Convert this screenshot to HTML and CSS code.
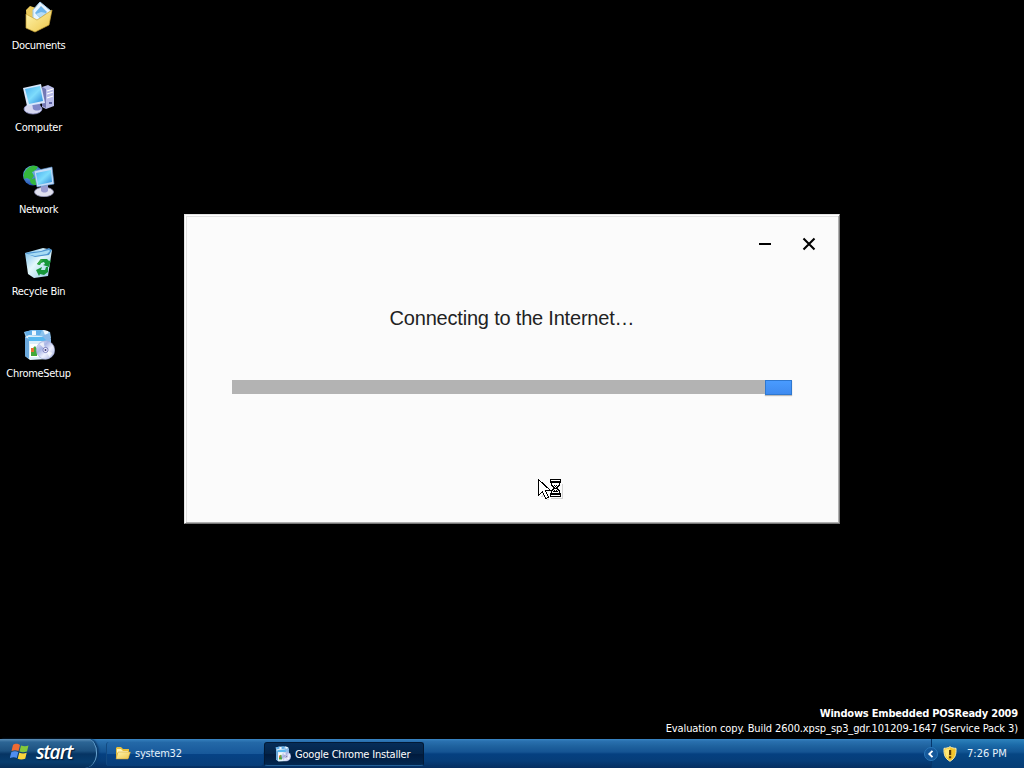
FILE: index.html
```html
<!DOCTYPE html>
<html lang="en">
<head>
<meta charset="utf-8">
<title>Desktop</title>
<link rel="stylesheet" href="styles.css">
</head>
<body>
<svg class="defs" width="0" height="0" aria-hidden="true">
  <defs>
    <linearGradient id="screen" x1="0" y1="0" x2="1" y2="1"><stop offset="0" stop-color="#4ab0f0"/><stop offset=".5" stop-color="#7edcfc"/><stop offset="1" stop-color="#2a86d8"/></linearGradient>
    <linearGradient id="folder" x1="0" y1="0" x2="1" y2="1"><stop offset="0" stop-color="#fff6b0"/><stop offset="1" stop-color="#edc548"/></linearGradient>
    <linearGradient id="bin" x1="0" y1="0" x2="1" y2="1"><stop offset="0" stop-color="#6fb8e8"/><stop offset=".45" stop-color="#e4f8fc"/><stop offset="1" stop-color="#90c8e4"/></linearGradient>
    <linearGradient id="disc" x1="0" y1="0" x2="1" y2="1"><stop offset="0" stop-color="#f4f4ff"/><stop offset=".35" stop-color="#a8b4e4"/><stop offset=".6" stop-color="#eef0ff"/><stop offset="1" stop-color="#9aa8d8"/></linearGradient>
    <radialGradient id="globe" cx=".35" cy=".3" r=".8"><stop offset="0" stop-color="#7cc4f8"/><stop offset="1" stop-color="#1440a8"/></radialGradient>
    <symbol id="setup" viewBox="0 0 32 32">
      <path d="M1 3l8-2 12 0 6 2 1 6H3z" fill="#8cc4ee"/><path d="M2 3l7-2v5l-5 1zM13 1h6l-2 5h-4z" fill="#62aee8"/><path d="M9 2h4v4H9zM20 1l5 1 2 6-5-2z" fill="#f0f8fe"/>
      <path d="M2 8l4-2 19 2v22l-18 1-5-4z" fill="#dceffa"/><path d="M2 8l4 2v20l-4-3z" fill="#6aa8dc"/>
      <path d="M5 8h18v4H6z" fill="#58b8f0"/><path d="M19 7l7-3 2 6v14l-5 6V11z" fill="#88b8e8"/>
      <path d="M7 15h9v13H7z" fill="#fff"/><path d="M8 21l4-4 2 3v7H8z" fill="#42a839"/><path d="M8 19h3v4H8z" fill="#e87030"/>
      <circle cx="22.500" cy="21" r="9.200" fill="url(#disc)" stroke="#a4acd8" stroke-width=".6"/>
      <path d="M22.500 21l-6-6 4-2zM22.500 21l7 3-3 4z" fill="#fff" opacity=".7"/>
      <circle cx="22.500" cy="21" r="2.600" fill="#f0f0ff" stroke="#6668b0" stroke-width=".8"/><circle cx="22.500" cy="21" r="1" fill="#383878"/>
    </symbol>
  </defs>
</svg>
<div class="desktop">
  <main class="workspace">
    <nav class="shortcuts">
      <div class="shortcut">
        <svg viewBox="0 0 32 32"><path d="M3 9l4-4 6 2 14 8-12 13-11-3z" fill="#eac95c"/><path d="M10 9l7-8 11 9-9 12-9-4z" fill="#e8f5ff" stroke="#9cc8e8"/><path d="M18 5l6 6-6 7-6-6z" fill="#6cb4ea"/><path d="M18 11l5 1-5 5-5-4z" fill="#b4dcf8"/><path d="M3 13l11 6 15-10-3 15-14 7-9-4z" fill="url(#folder)" stroke="#c9a234" stroke-width=".7"/></svg>
        <span class="name">Documents</span>
      </div>
      <div class="shortcut">
        <svg viewBox="0 0 32 32"><path d="M19 4l6-2 6 3v18l-8 3-4-2z" fill="#b8bce8"/><path d="M19 4l4 2v19l-4-2z" fill="#7478b4"/><path d="M24 8l6-2M24 11l6-2M24 15l6-2" stroke="#fff" stroke-width="1.200"/><path d="M26 19h3v2h-3z" fill="#5c62a4"/><ellipse cx="10" cy="26" rx="9" ry="5" fill="#d6d8f0" stroke="#8a8ec4" stroke-width=".8"/><path d="M9 20h8l1 6c-2 2-6 2-8 0z" fill="#8088c8"/><path d="M0 5l18-4 4 19-18 3z" fill="#d8e8fc"/><path d="M2 6l15-3 3 15-14 3z" fill="url(#screen)"/></svg>
        <span class="name">Computer</span>
      </div>
      <div class="shortcut">
        <svg viewBox="0 0 32 32"><circle cx="10" cy="10.500" r="10" fill="url(#globe)"/><path d="M3 5c4-5 9-5 12-3l-3 4-3 1 2 4-3 4-4-2-3 1c-1-4 0-7 2-9zM7 15l5-2 4 4-3 3c-4 0-6-2-6-5z" fill="#35b83d"/><ellipse cx="21" cy="27" rx="9.500" ry="4.700" fill="#e0e0ee" stroke="#9294b8" stroke-width=".8"/><path d="M18 20h7v6c-2 2-5 2-7 0z" fill="#9a9cd0"/><path d="M11 6l18-4 2 17-17 3z" fill="#c4dcf8" stroke="#5c94d0" stroke-width=".6"/><path d="M13 8l15-3 1 12-14 3z" fill="url(#screen)"/></svg>
        <span class="name">Network</span>
      </div>
      <div class="shortcut">
        <svg viewBox="0 0 32 32"><path d="M2 6l18-5 9 2-4 26-14 2-6-4z" fill="url(#bin)"/><path d="M2 6l16-2 8-3 3 2-3 5-14 2z" fill="#4c94d0"/><path d="M4 7l14-2 8-2 1 1-3 3-12 2z" fill="#a8dcf4"/><path d="M14 17l4-5 6 0 2 2 2-1-2 7-6-2 2-1-1-2-3 1-1 2z" fill="#16963a"/><path d="M25 20l0 5-4 3-4-1-1 2-3-6 6-3-1 3 4 0 1-3z" fill="#16963a"/><path d="M14 17l4-5 2 1-4 5z" fill="#37ac46"/></svg>
        <span class="name">Recycle Bin</span>
      </div>
      <div class="shortcut">
        <svg viewBox="0 0 32 32"><use href="#setup"/></svg>
        <span class="name">ChromeSetup</span>
      </div>
    </nav>

    <section class="installer">
      <header class="controls">
        <svg viewBox="0 0 14 14"><path d="M1 7h12" stroke="#000" stroke-width="2"/></svg>
        <svg viewBox="0 0 14 14"><path d="M1.500 1.500l11 11M12.500 1.500l-11 11" stroke="#000" stroke-width="2.100"/></svg>
      </header>
      <h1 class="message"><span>Connecting to the Internet…</span></h1>
      <div class="progress"><div class="marquee"></div></div>
    </section>

    <footer class="build">
      <div class="edition"><span>Windows Embedded POSReady 2009</span></div>
      <div class="copy"><span>Evaluation copy. Build 2600.xpsp_sp3_gdr.101209-1647 (Service Pack 3)</span></div>
    </footer>

    <svg class="cursor" viewBox="0 0 28 24" shape-rendering="crispEdges"><path d="M4 19l3-2 3 4M10 21h2M14 20.500h11.500V6" fill="none" stroke="#bbb" opacity=".6"/><path d="M1.500 1.500v16l4-4 3 7 3-1-3-7h5z" fill="#fff" stroke="#000"/><path d="M13 1h11v4H13zM13 15h11v4H13z" fill="#000"/><path d="M14 5h9v3h-1v1h-1v2h1v1h1v3h-9v-3h1v-1h1V9h-1V8h-1z" fill="#000"/><path d="M15 5h7v2h-1v1h-1v1h-1v2h1v1h1v1h1v2h-7v-2h1v-1h1v-1h1V9h-1V8h-1V7h-1z" fill="#fff"/><path d="M14 2h9v1h-9zM14 17h9v1h-9z" fill="#fff"/><path d="M17 7h1v1h1V7h1v1h-1v1h-1V8h-1zM18 10h1v1h-1zM17 12h1v1h1v-1h1v1h1v1h-5v-1h1z" fill="#000"/></svg>
  </main>

  <footer class="taskbar">
    <div class="start">
      <svg viewBox="0 0 20 20"><path d="M3 3c3-2 5-1 7 0L8.500 9C6 8 4 8 1.500 9z" fill="#f06a32"/><path d="M11 3.500c3 1 5 1 7.500 0L17 9.500c-3 1-5 1-7.500 0z" fill="#83c83a"/><path d="M1.300 10.200c3-1.500 5-1 7 0L6.800 16c-2-1-4-1-7 0z" fill="#4f8df0"/><path d="M9.200 10.700c3 1 5 1 7.500 0l-1.500 6c-3 1-5 1-7.500 0z" fill="#fbd43c"/></svg>
      <span>start</span>
    </div>
    <div class="task">
      <svg viewBox="0 0 16 16"><path d="M1 3l1-1h4l2 2h6v9H1z" fill="#e8c03c"/><path d="M2 4h4l2 2h5v2H2z" fill="#fff6b8"/><path d="M3 7h12.500L13 14H1z" fill="url(#folder)" stroke="#c8982c" stroke-width=".5"/></svg>
      <span class="t-sys">system32</span>
    </div>
    <div class="task pressed">
      <svg viewBox="0 0 32 32"><use href="#setup"/></svg>
      <span class="t-inst">Google Chrome Installer</span>
    </div>
    <div class="tray">
      <svg class="chevron" viewBox="0 0 14 14"><circle cx="7" cy="7" r="6.500" fill="#15589a" stroke="#2b77b8"/><path d="M8.500 3.800L5.300 7l3.200 3.200" fill="none" stroke="#fff" stroke-width="1.900"/></svg>
      <svg class="shield" viewBox="0 0 14 16"><path d="M7 .7c2 1.300 4 1.600 6 1.600.3 6-.7 10-6 13C1.700 12.300.7 8.300 1 2.300 3 2.300 5 2 7 .7z" fill="#f4c52c" stroke="#f7edb0"/><path d="M7 2c-2 1-3 1.400-5 1.400 0 4 .6 7 3 9z" fill="#ffe878"/><path d="M6 4h2.200v5H6zM6 10.200h2.200v2H6z" fill="#5a3a08"/></svg>
      <time>7:26 PM</time>
    </div>
  </footer>
</div>
</body>
</html>
```
FILE: styles.css
```css
* { box-sizing: border-box; }
body {
  margin: 0;
  background: #000;
  color: #fff;
  font: 11px/13px "DejaVu Sans Condensed", "DejaVu Sans", sans-serif;
  font-stretch: condensed;
}
span, time { white-space: nowrap; }
svg { display: block; flex: none; }
.defs { position: absolute; }
.desktop { width: 1024px; height: 768px; display: flex; flex-direction: column; overflow: hidden; }

.workspace {
  position: relative;
  flex: 1;
  display: grid;
  grid-template: 524px 1fr / 184px 656px 1fr;
}
.shortcuts { padding-top: 1px; display: flex; flex-direction: column; width: 77px; }
.shortcut { height: 82px; display: flex; flex-direction: column; align-items: center; gap: 6px; flex: none; }
.shortcut svg { width: 32px; height: 32px; }
.name { letter-spacing: -.3px; }

.installer {
  align-self: end;
  height: 310px;
  background: #fbfbfb;
  border: 1px solid;
  border-color: #e4e4e4 #777 #777 #e4e4e4;
  box-shadow: inset 1px 1px #fff, inset -1px -1px #b0b0b0, inset 2px 2px #e2e2e2;
}
.controls { height: 57px; padding: 0 23px 0 0; display: flex; justify-content: flex-end; align-items: center; gap: 30px; }
.controls svg { width: 14px; height: 14px; }
.message {
  margin: 34px 0 0;
  text-align: center;
  color: #222;
  font: 400 20px/24px "Liberation Sans", Arial, sans-serif;
  letter-spacing: -.2px;
}
.progress {
  margin: 50px 47px 0;
  height: 14px;
  display: flex;
  justify-content: flex-end;
  background: #b3b3b3;
}
.marquee { width: 27px; height: 15px; background: linear-gradient(#499bff, #3f8bf0); border: 1px solid #2f78d0; box-shadow: 0 1px 1px #bbb; }

.build { grid-column: 1 / -1; grid-row: 2; align-self: end; padding: 0 6px 3px 0; text-align: right; line-height: 15px; letter-spacing: -.1px; }
.edition { font: 700 11px/15px "DejaVu Sans Condensed", "DejaVu Sans", sans-serif; font-stretch: condensed; letter-spacing: -.2px; }

.cursor { position: absolute; left: 537px; top: 478px; width: 28px; height: 24px; }

.taskbar {
  flex: none;
  height: 29px;
  display: flex;
  background: linear-gradient(#3a86c4 0, #2a71b0 2px, #1f639f 7px, #155493 13px, #054080 15px, #063d79 22px, #052e60 29px);
}
.start {
  width: 97px;
  padding: 0 0 3px 10px;
  display: flex;
  align-items: center;
  gap: 6px;
  border-right: 1px solid #6aa4cf;
  border-radius: 0 9px 12px 0 / 0 14px 15px 0;
  background: linear-gradient(#5b8fb9 0, #2c6595 3px, #1c507f 12px, #063463 15px, #073d6e 23px, #062d57 29px);
  box-shadow: 2px 0 2px #0a3a6c;
}
.start svg { width: 20px; height: 20px; }
.start span { font: italic 600 19px/24px "Open Sans", "Noto Sans", sans-serif; font-stretch: normal; letter-spacing: -1px; text-shadow: 1px 1px 1px #021a38; }
.task { display: flex; align-items: center; gap: 4px; width: 157px; margin: 3px 0 2px 9px; padding: 0 0 2px 8px; border-left: 1px solid #124a82; border-radius: 3px; background: linear-gradient(#2469a8, #17589a 50%, #064285 52%, #083e79); color: #e4f1fb; letter-spacing: -.2px; }
.task svg { width: 16px; height: 16px; }
.task.pressed { width: 160px; margin-left: 1px; padding: 0 0 0 10px; background: linear-gradient(#062d58, #042448 50%, #011b3d 52%, #022750); border: 1px solid #021a36; border-bottom-color: #246096; color: #fff; }
.tray { margin-left: auto; width: 93px; display: flex; align-items: center; border-left: 1px solid #04366b; background: linear-gradient(#2e83bd 0, #1b6aa8 6px, #125593 13px, #064683 15px, #063d75 29px); }
.chevron { width: 14px; height: 14px; margin-left: -8px; }
.shield { width: 14px; height: 16px; margin-left: 5px; }
.tray time { margin-left: 10px; color: #e6f2fb; }
```
